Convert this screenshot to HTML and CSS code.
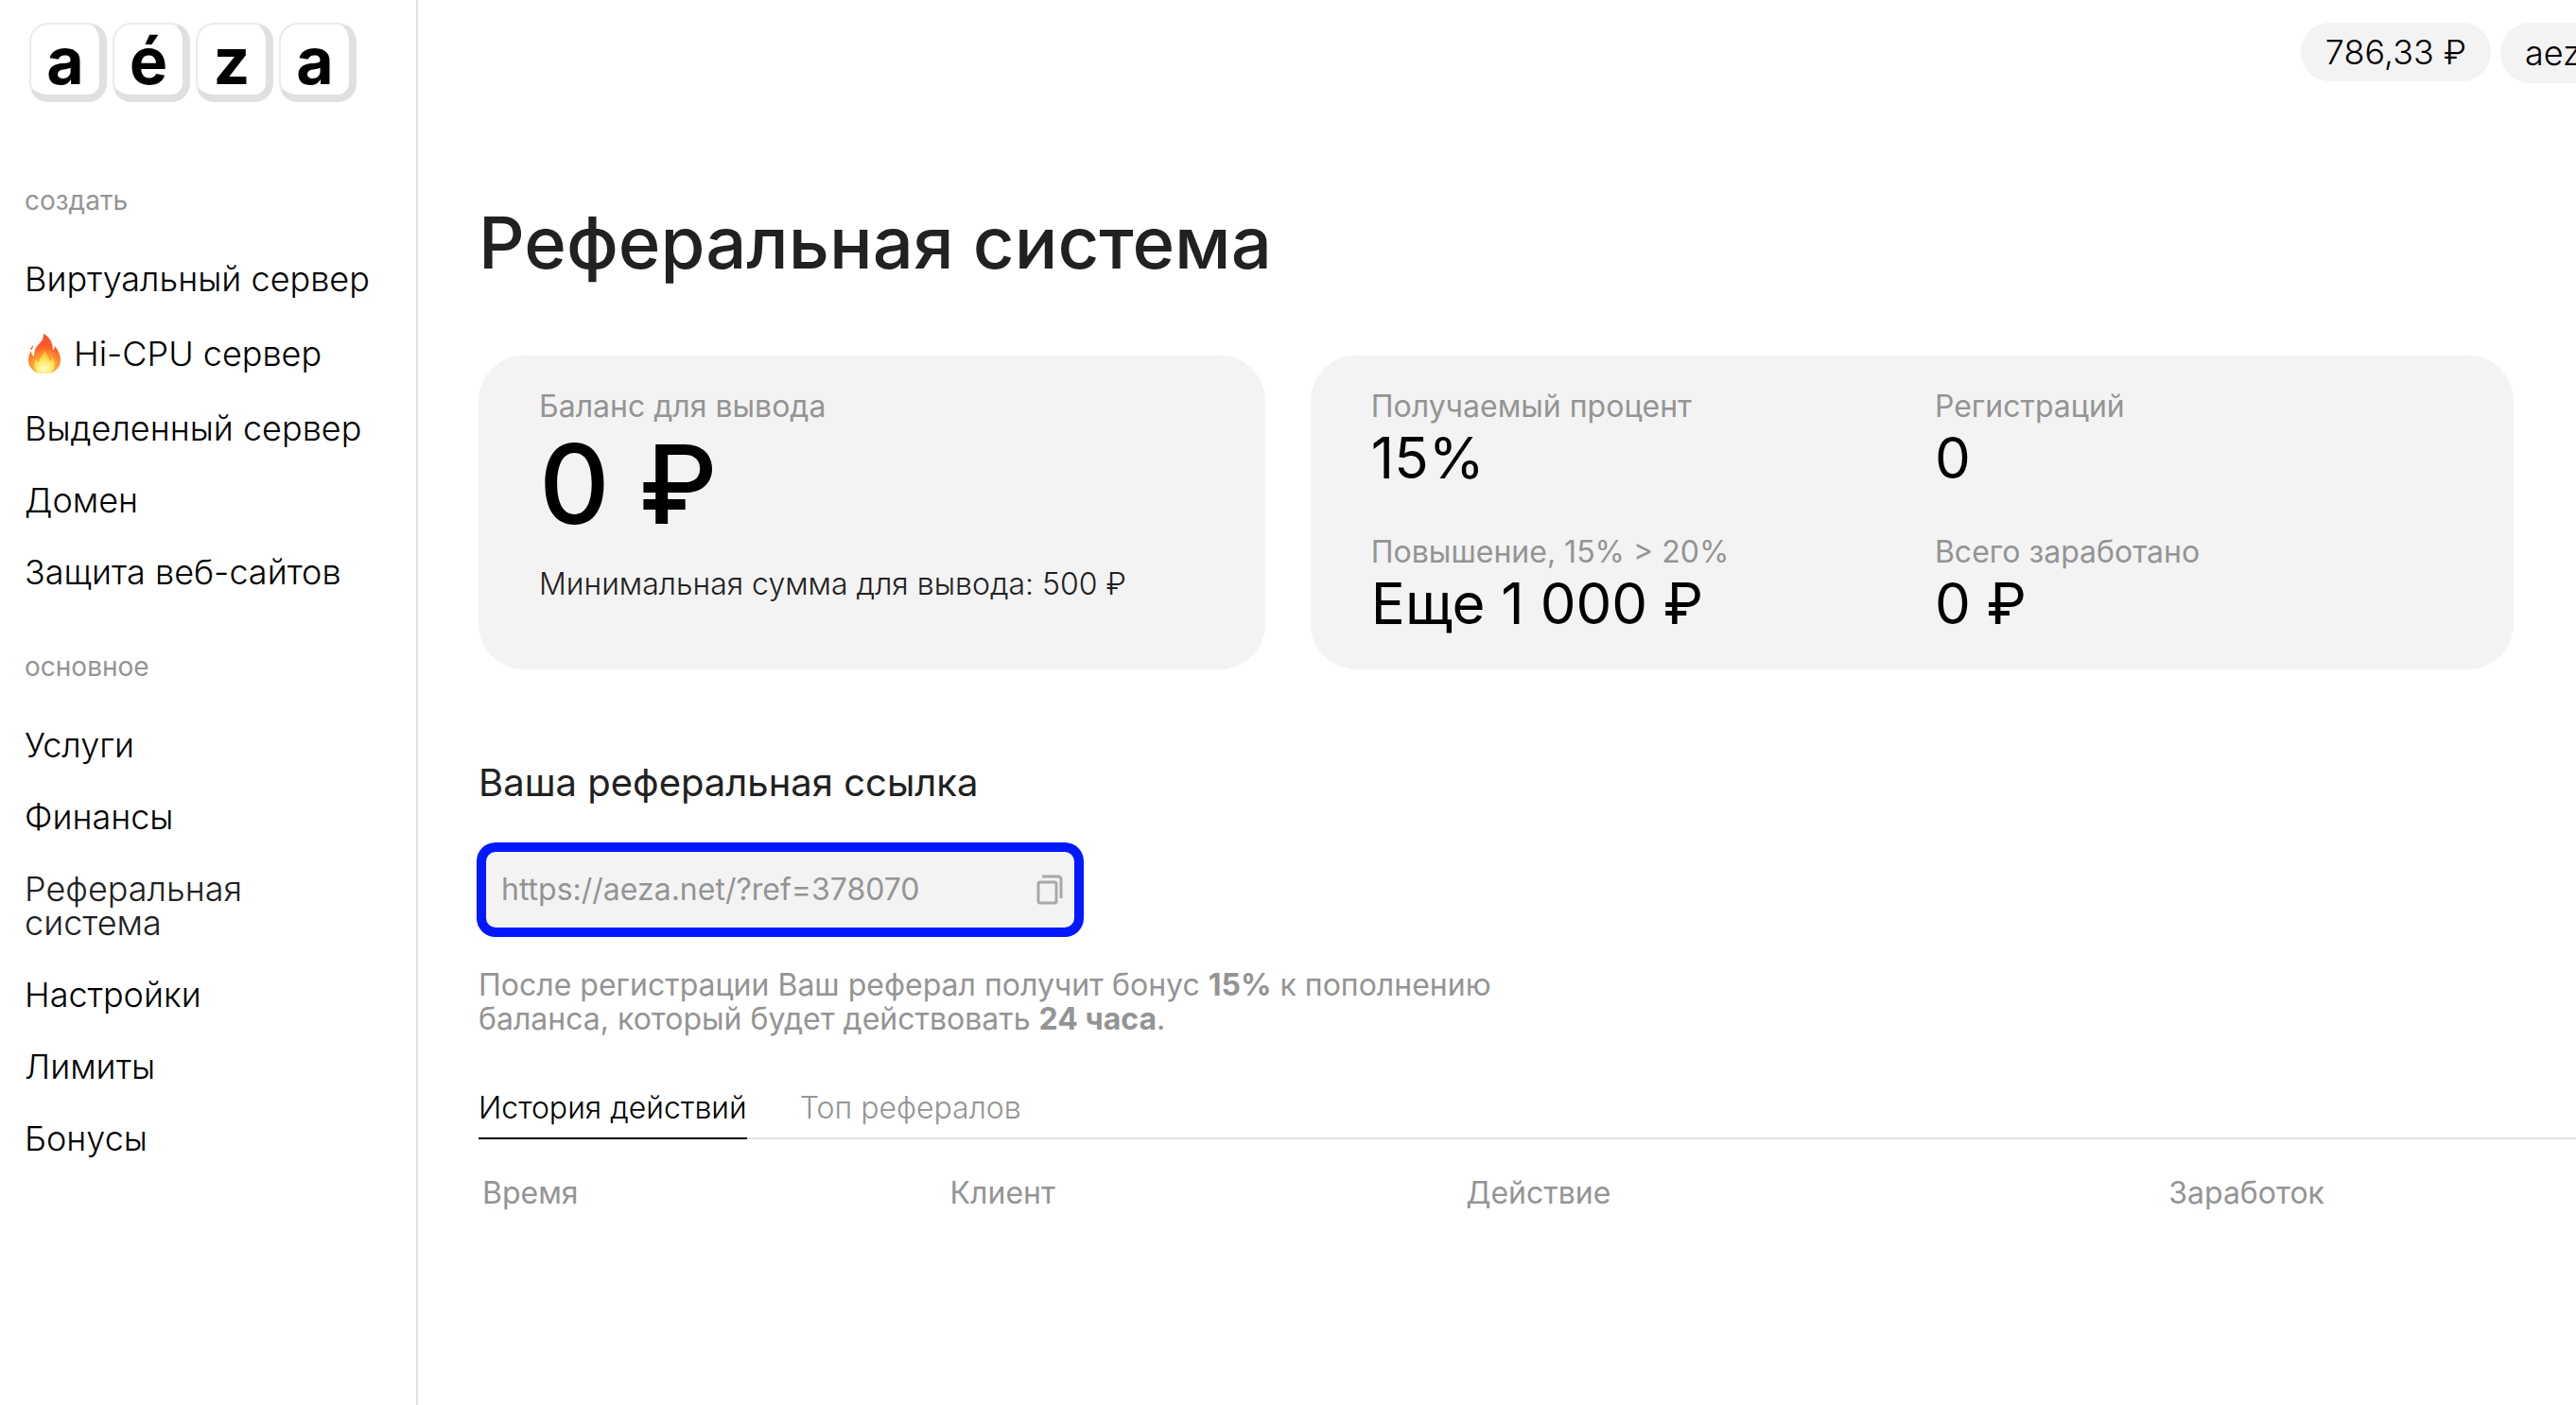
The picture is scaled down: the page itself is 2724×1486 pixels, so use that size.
FILE: index.html
```html
<!DOCTYPE html>
<html lang="ru">

<head>
    <meta charset="UTF-8">
    <meta name="viewport" content="width=device-width, initial-scale=1.0">
    <title>Реферальная система</title>
    <link rel="stylesheet" href="styles.css">
</head>

<body>
    <aside class="sidebar">
        <a href="#" class="logo" aria-label="aéza">
            <span class="key">a</span>
            <span class="key">é</span>
            <span class="key">z</span>
            <span class="key">a</span>
        </a>

        <nav class="menu">
            <p class="menu-title">создать</p>
            <ul>
                <li><a href="#">Виртуальный сервер</a></li>
                <li>
                    <a href="#" class="hot">
                        <svg class="fire" viewBox="0 0 34 42" aria-hidden="true">
                            <defs>
                                <radialGradient id="flame" cx="17" cy="38" r="36" gradientUnits="userSpaceOnUse">
                                    <stop offset="0" stop-color="#ffc83a" />
                                    <stop offset="0.4" stop-color="#ff9d33" />
                                    <stop offset="0.7" stop-color="#ff5a26" />
                                    <stop offset="1" stop-color="#fa4a34" />
                                </radialGradient>
                                <radialGradient id="core" cx="17" cy="37" r="15" gradientUnits="userSpaceOnUse">
                                    <stop offset="0" stop-color="#fffbd0" />
                                    <stop offset="0.5" stop-color="#ffee70" />
                                    <stop offset="1" stop-color="#ffc637" />
                                </radialGradient>
                            </defs>
                            <path fill="url(#flame)" d="M16 0c6 3 10 9 10 18 1-1 2-3 2-5 4 5 6 10 6 15 0 8-6 14-17 14S0 36 0 28c0-4 1-7 3-10 0 3 1 5 3 6 0-7 2-10 6-14 3-3 4-6 4-10z" />
                            <path fill="#fb5a35" d="M5 12c-1 2-3 3-3 5 2 0 3-2 3-5z" />
                            <path fill="url(#core)" d="M17 18c4 5 4 8 6 11 1-1 2-2 2-4 2 3 3 5 3 8 0 5-4 9-11 9S6 38 6 33c0-3 1-4 2-6 1 1 1 2 3 3 1-5 5-7 6-12z" />
                        </svg>
                        Hi-CPU сервер
                    </a>
                </li>
                <li><a href="#">Выделенный сервер</a></li>
                <li><a href="#">Домен</a></li>
                <li><a href="#">Защита веб-сайтов</a></li>
            </ul>

            <p class="menu-title">основное</p>
            <ul>
                <li><a href="#">Услуги</a></li>
                <li><a href="#">Финансы</a></li>
                <li><a href="#" class="active">Реферальная<br>система</a></li>
                <li><a href="#">Настройки</a></li>
                <li><a href="#">Лимиты</a></li>
                <li><a href="#">Бонусы</a></li>
            </ul>
        </nav>
    </aside>

    <div class="page">
        <header class="topbar">
            <a href="#" class="chip">786,33 ₽</a>
            <button type="button" class="chip account">aeza</button>
        </header>

        <main>
            <h1>Реферальная система</h1>

            <section class="cards">
                <div class="card">
                    <p class="label">Баланс для вывода</p>
                    <p class="balance">0 ₽</p>
                    <p class="minimum">Минимальная сумма для вывода: 500 ₽</p>
                </div>

                <div class="card stats">
                    <div>
                        <p class="label">Получаемый процент</p>
                        <p class="value">15%</p>
                    </div>
                    <div>
                        <p class="label">Регистраций</p>
                        <p class="value">0</p>
                    </div>
                    <div>
                        <p class="label">Повышение, 15% &gt; 20%</p>
                        <p class="value">Еще 1 000 ₽</p>
                    </div>
                    <div>
                        <p class="label">Всего заработано</p>
                        <p class="value">0 ₽</p>
                    </div>
                </div>
            </section>

            <h2><label for="refLink">Ваша реферальная ссылка</label></h2>
            <div class="ref-link">
                <input type="text" id="refLink" value="https://aeza.net/?ref=378070" readonly>
                <button type="button" aria-label="Скопировать">
                    <svg viewBox="0 0 28 32" fill="none" stroke="#a8a8a8" stroke-width="3" aria-hidden="true">
                        <rect x="2" y="8" width="19" height="22" rx="2" />
                        <path d="M6 2h17a3 3 0 0 1 3 3v20" />
                    </svg>
                </button>
            </div>

            <p class="note">После регистрации Ваш реферал получит бонус <b>15%</b> к пополнению баланса, который будет действовать <b>24 часа</b>.</p>

            <div class="tabs" role="tablist">
                <button type="button" class="tab selected" role="tab" aria-selected="true">История действий</button>
                <button type="button" class="tab" role="tab" aria-selected="false">Топ рефералов</button>
            </div>

            <table class="history">
                <thead>
                    <tr>
                        <th class="time">Время</th>
                        <th class="client">Клиент</th>
                        <th class="action">Действие</th>
                        <th>Заработок</th>
                    </tr>
                </thead>
                <tbody></tbody>
            </table>
        </main>
    </div>
</body>

</html>
```
FILE: styles.css
```css
* {
    box-sizing: border-box;
}

body {
    display: flex;
    min-height: 100vh;
    margin: 0;
    background: #fff;
    color: #000;
    font-family: Inter, sans-serif;
    font-size: 32px;
    line-height: 36px;
}

h1,
h2,
p,
ul {
    margin: 0;
    padding: 0;
}

a {
    color: inherit;
    text-decoration: none;
}

button,
input {
    padding: 0;
    border: none;
    background: none;
    color: inherit;
    font: inherit;
}

button {
    cursor: pointer;
}

/* sidebar */
.sidebar {
    flex: 0 0 442px;
    padding-top: 24px;
    border-right: 2px solid #e0e0e0;
}

.logo {
    display: flex;
    gap: 6px;
    padding-left: 31px;
}

.key {
    width: 82px;
    height: 84px;
    border: 2px solid #ebebeb;
    border-right: 8px solid #e0e0e0;
    border-bottom: 8px solid #e0e0e0;
    border-radius: 20px;
    font-size: 68px;
    font-weight: 700;
    line-height: 76px;
    text-align: center;
}

.menu {
    padding: 22px 24px 0 26px;
}

.menu-title {
    margin: 68px 0 51px;
    color: #949494;
    font-size: 28px;
    line-height: 28px;
}

.menu ul {
    display: flex;
    flex-direction: column;
    gap: 40px;
    list-style: none;
    font-size: 36px;
    font-weight: 300;
    white-space: nowrap;
}

.menu a {
    display: block;
}

.menu .active {
    color: #212121;
}

.menu .hot {
    display: flex;
    align-items: center;
    gap: 14px;
    padding-left: 4px;
}

.fire {
    width: 34px;
    height: 42px;
}

/* content */
.page {
    flex: 1;
    min-width: 0;
}

.topbar {
    display: flex;
    justify-content: flex-end;
    align-items: flex-start;
    gap: 10px;
    padding-top: 24px;
}

.chip {
    padding: 0 26px;
    border-radius: 32px;
    background: #f3f3f3;
    font-size: 36px;
    font-weight: 300;
    line-height: 62px;
    white-space: nowrap;
}

.account {
    width: 80px;
    height: 64px;
    padding-right: 0;
    border-radius: 32px 0 0 32px;
    overflow: hidden;
}

main {
    padding: 122px 0 0 64px;
}

h1 {
    margin-bottom: 74px;
    color: #212121;
    font-size: 76px;
    font-weight: 500;
    line-height: 92px;
}

.cards {
    display: grid;
    grid-template-columns: 17fr 26fr;
    gap: 48px;
    margin: 0 66px 96px 0;
}

.card {
    padding: 36px 64px 34px;
    border-radius: 48px;
    background: #f3f3f3;
}

.label {
    color: #949494;
}

.balance {
    margin-bottom: 24px;
    font-size: 116px;
    font-weight: 500;
    line-height: 128px;
}

.minimum {
    color: #212121;
    font-weight: 300;
}

.stats {
    display: grid;
    grid-template-columns: 1fr 1fr;
    gap: 46px 48px;
}

.value {
    font-size: 60px;
    line-height: 72px;
}

h2 {
    margin-bottom: 41px;
    color: #212121;
    font-size: 40px;
    font-weight: 400;
    line-height: 48px;
}

.ref-link {
    display: flex;
    align-items: center;
    max-width: 638px;
    height: 96px;
    padding: 0 12px 0 16px;
    border: 8px solid #0019ff;
    border-radius: 18px;
    background: #f3f3f3;
    box-shadow: 0 0 0 2px #0019ff;
    color: #949494;
}

.ref-link input {
    flex: 1;
    min-width: 0;
    outline: none;
}

.ref-link svg {
    display: block;
    width: 28px;
    height: 32px;
}

.note {
    max-width: 1080px;
    margin: 35px 0 58px;
    color: #949494;
}

/* tabs and table */
.tabs {
    display: flex;
    gap: 56px;
    border-bottom: 2px solid #e0e0e0;
}

.tab {
    margin-bottom: -2px;
    padding-bottom: 13px;
    border-bottom: 2px solid transparent;
    color: #949494;
    font-weight: 300;
}

.tab.selected {
    border-color: #000;
    color: #000;
}

.history {
    width: 2218px;
    max-width: 100%;
    margin-top: 37px;
    border-collapse: collapse;
    table-layout: fixed;
}

.history th {
    padding: 2px 4px;
    color: #949494;
    font-weight: 400;
    text-align: left;
}

.time {
    width: 22.3%;
}

.client {
    width: 24.6%;
}

.action {
    width: 33.5%;
}
```
